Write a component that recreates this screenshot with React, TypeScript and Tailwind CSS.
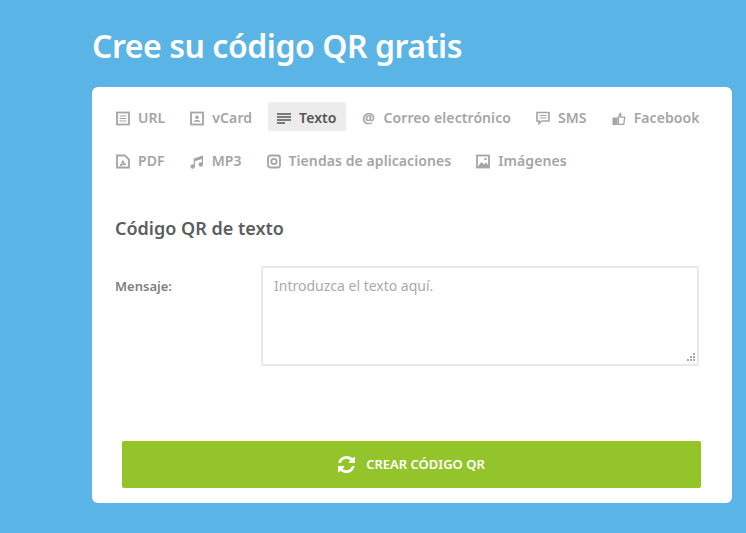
import { ReactNode } from "react";

const GREY = "#a5a5a5";

function Box({ children }: { children: ReactNode }) {
  return (
    <svg width="14" height="15" viewBox="0 0 14 15" fill="none" stroke={GREY} strokeWidth="1.8" className="mt-[3px] shrink-0">
      {children}
    </svg>
  );
}

const icons: Record<string, ReactNode> = {
  url: (
    <Box>
      <rect x="1" y="1.5" width="12" height="12" />
      <path d="M3.5 5h7M3.5 7.5h7M3.5 10h7" strokeWidth="1.2" />
    </Box>
  ),
  vcard: (
    <Box>
      <rect x="1" y="1.5" width="12" height="12" />
      <circle cx="7" cy="6.3" r="1.8" fill={GREY} stroke="none" />
      <path d="M3.6 10.8c.5-2.400 6.300-2.400 6.800 0z" fill={GREY} stroke="none" />
    </Box>
  ),
  texto: (
    <svg width="14" height="13" viewBox="0 0 14 13" fill="none" stroke="#555" strokeWidth="1.5" className="mt-[3px] shrink-0">
      <path d="M0 2h14M0 5h14M0 8h14M0 11h8" />
    </svg>
  ),
  pdf: (
    <Box>
      <path d="M1 1.500h8l4 4v8H1z" />
      <path d="M4 11.500c1.500-1 2.500-3 2.700-5 .5 2 1.500 3.500 3.300 4-2-.2-4 .2-6 1z" strokeWidth="1.200" />
    </Box>
  ),
  mp3: (
    <svg width="14" height="15" viewBox="0 0 14 15" fill={GREY} className="mt-[3px] shrink-0">
      <circle cx="2.700" cy="12.500" r="2.200" />
      <circle cx="10.800" cy="10.500" r="2.200" />
      <path d="M3.700 12.500V4.500L13 1.500v9h-1.200V5L4.900 7.300v5.200z" />
    </svg>
  ),
  store: (
    <Box>
      <rect x="1" y="1.500" width="12" height="12" rx="2.500" />
      <circle cx="7" cy="7.500" r="2.700" />
    </Box>
  ),
  sms: (
    <svg width="14" height="14" viewBox="0 0 14 14" fill="none" stroke={GREY} strokeWidth="1.600" className="mt-[3px] shrink-0">
      <path d="M1 1.500h12v8.500H6l-3 2.500V10H1z" />
      <path d="M3.500 4.500h7M3.500 7h7" strokeWidth="1.200" />
    </svg>
  ),
  facebook: (
    <svg width="14" height="15" viewBox="0 0 14 15" fill={GREY} className="mt-[3px] shrink-0">
      <rect x="0.500" y="6.500" width="5" height="7.500" />
      <path d="M5.500 6.500 8 1.500c1.500 0 1.800 1.500 1.200 4H13.500l-1.200 8.500H5.500zM7 7v5.800h4.200l.8-6h-4l.300-2z" fillRule="evenodd" />
    </svg>
  ),
  images: (
    <Box>
      <rect x="1" y="1.500" width="12" height="12" />
      <path d="M1.500 13 5.500 8l2.500 2.500 2-2 3 3.500v1z" fill={GREY} stroke="none" />
      <circle cx="9.500" cy="5" r="1.200" fill={GREY} stroke="none" />
    </Box>
  ),
};

type Tab = { key: string; label: string; active?: boolean };

const TABS: Tab[] = [
  { key: "url", label: "URL" },
  { key: "vcard", label: "vCard" },
  { key: "texto", label: "Texto", active: true },
  { key: "at", label: "Correo electrónico" },
  { key: "sms", label: "SMS" },
  { key: "facebook", label: "Facebook" },
  { key: "pdf", label: "PDF" },
  { key: "mp3", label: "MP3" },
  { key: "store", label: "Tiendas de aplicaciones" },
  { key: "images", label: "Imágenes" },
];

function TabItem({ tab }: { tab: Tab }) {
  return (
    <div
      className={`flex items-center gap-2 h-[29px] px-[9px] rounded-[2px] text-[14px] font-semibold tracking-[0.08px] whitespace-nowrap ${
        tab.active ? "bg-[#ececec] text-[#555555]" : "text-[#a5a5a5]"
      }`}
    >
      {tab.key === "at" ? (
        <span className="mt-[2px] w-[14px] text-center text-[14px] font-bold leading-none">@</span>
      ) : (
        icons[tab.key]
      )}
      <span className="pt-[1px]">{tab.label}</span>
    </div>
  );
}

export default function App() {
  return (
    <div className="h-[533px] w-[746px] overflow-hidden bg-[#5ab4e5] pl-[92px] font-['Noto_Sans',sans-serif]">
      <h1 className="flex h-[87px] items-center pt-[4px] text-[32px] font-semibold tracking-[-0.45px] text-white">
        Cree su código QR gratis
      </h1>
      <div className="h-[416px] w-[640px] rounded-[6px] bg-white px-[15px] pt-[15px]">
        <div className="flex flex-wrap gap-x-[7px] gap-y-[14px]">
          {TABS.map((tab) => (
            <TabItem key={tab.key} tab={tab} />
          ))}
        </div>
        <h2 className="mt-[40px] pl-2 text-[18px] font-semibold leading-[28px] text-[#5a5e63]">
          Código QR de texto
        </h2>
        <div className="mt-[24px] flex">
          <label className="w-[154px] pl-2 pt-[11px] text-[13px] font-semibold text-[#7d8186]">Mensaje:</label>
          <div className="relative">
            <textarea
              className="block h-[100px] w-[438px] resize-none rounded-[2px] border-2 border-[#e8e8e8] bg-white px-[11px] py-[7px] text-[14px] outline-none placeholder:text-[#aaaaaa]"
              placeholder="Introduzca el texto aquí."
            />
            <svg width="9" height="9" viewBox="0 0 9 9" fill="#aaaaaa" className="absolute bottom-[4px] right-[3px]">
              <path d="M6 0h2v2H6zM3 3h2v2H3zM6 3h2v2H6zM0 6h2v2H0zM3 6h2v2H3zM6 6h2v2H6z" />
            </svg>
          </div>
        </div>
        <button className="ml-[15px] mt-[75px] flex h-[47px] w-[579px] items-center justify-center gap-[11px] rounded-[2px] bg-[#93c52b] text-[13px] font-semibold text-white">
          <svg width="17" height="17" viewBox="0 0 1536 1536" fill="white">
            <path d="M1511 928q0 5-1 7-64 268-268 434.500T764 1536q-146 0-282.500-55T238 1324l-129 129q-19 19-45 19t-45-19-19-45V960q0-26 19-45t45-19h448q26 0 45 19t19 45-19 45L420 1142q71 66 161 102t187 36q134 0 250-65t186-179q11-17 53-117 8-23 30-23h192q13 0 22.500 9.500t9.500 22.500zm25-800v448q0 26-19 45t-45 19h-448q-26 0-45-19t-19-45 19-45l138-138q-148-137-349-137-134 0-250 65T332 500q-11 17-53 117-8 23-30 23H50q-13 0-22.500-9.500T18 608v-7q65-268 270-434.500T768 0q146 0 284 55.500T1297 212l130-129q19-19 45-19t45 19 19 45z" />
          </svg>
          <span>CREAR CÓDIGO QR</span>
        </button>
      </div>
    </div>
  );
}
